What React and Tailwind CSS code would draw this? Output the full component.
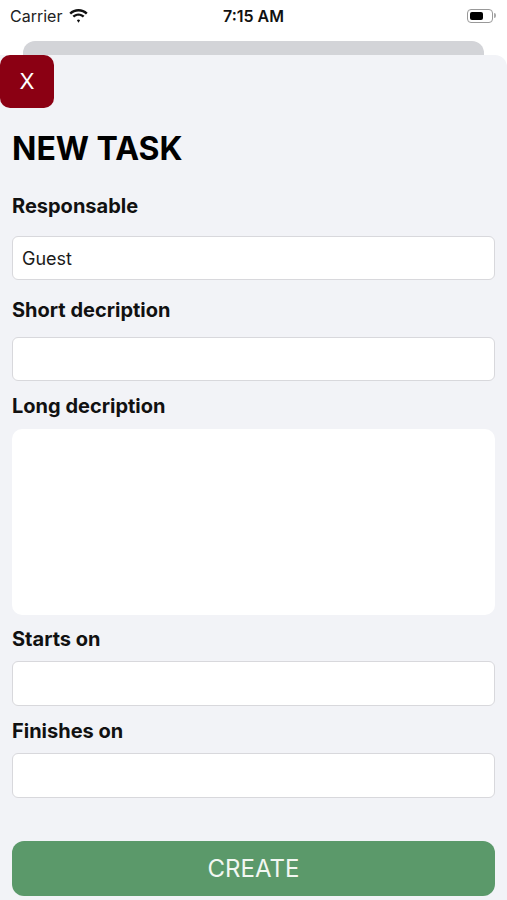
export default function App() {
  return (
    <div className="w-[507px] h-[900px] overflow-hidden bg-white relative" style={{ fontFamily: 'Inter, "Noto Sans", sans-serif' }}>
      {/* Status bar */}
      <div className="h-[31px] flex items-center justify-between px-[10px] text-[#111]">
        <div className="flex items-center gap-[6px] w-[120px]">
          <span className="text-[16px] leading-none text-[#222]">Carrier</span>
          <svg width="21" height="16" viewBox="0 0 20 15">
            <path d="M10 3.2c2.7 0 5.2 1 7.1 2.8l1.6-1.6C16.3 2.1 13.3.9 10 .9S3.7 2.1 1.3 4.4l1.6 1.6C4.8 4.2 7.3 3.2 10 3.2z" fill="#111" />
            <path d="M10 7.3c1.6 0 3 .6 4.1 1.6l1.6-1.6C14.2 5.9 12.2 5 10 5S5.8 5.9 4.3 7.3l1.6 1.6C7 7.9 8.4 7.3 10 7.3z" fill="#111" />
            <path d="M10 10.9c.6 0 1.1.2 1.5.6L10 13.9 8.5 11.5c.4-.4.9-.6 1.5-.6z" fill="#111" />
          </svg>
        </div>
        <span className="text-[16px] font-semibold leading-none">7:15 AM</span>
        <div className="w-[120px] flex justify-end pr-[1px]">
          <div className="flex items-center">
            <div className="w-[26px] h-[14px] rounded-[4px] border border-[#999] p-[2px] flex">
              <div className="w-[13px] h-full rounded-[2px] bg-black" />
            </div>
            <div className="w-[2px] h-[5px] rounded-r-sm bg-[#aaa] ml-[1px]" />
          </div>
        </div>
      </div>

      {/* Background card */}
      <div className="mt-[10px] mx-[23px] h-[20px] rounded-t-[12px] bg-[#d3d4d8]" />

      {/* Sheet */}
      <div className="absolute left-0 right-0 top-[55px] bottom-0 bg-[#f2f3f7] rounded-tr-[12px]">
        <button className="w-[54px] h-[53px] rounded-[10px] bg-[#8b0013] text-white text-[22px] flex items-center justify-center">
          X
        </button>

        <div className="px-[12px]">
          <h1 className="mt-[21px] text-[32px] leading-[40px] font-bold text-black">NEW TASK</h1>

          <label className="block mt-[25px] text-[20px] leading-[24px] font-bold text-[#111]">Responsable</label>
          <div className="mt-[18px] h-[44px] bg-white border border-[#d8d8dc] rounded-[6px] flex items-center px-[9px] text-[18px] text-[#1a1a1a]">
            Guest
          </div>

          <label className="block mt-[18px] text-[20px] leading-[24px] font-bold text-[#111]">Short decription</label>
          <div className="mt-[15px] h-[44px] bg-white border border-[#d8d8dc] rounded-[6px]" />

          <label className="block mt-[13px] text-[20px] leading-[24px] font-bold text-[#111]">Long decription</label>
          <div className="mt-[11px] h-[186px] bg-white rounded-[10px]" />

          <label className="block mt-[12px] text-[20px] leading-[24px] font-bold text-[#111]">Starts on</label>
          <div className="mt-[10px] h-[45px] bg-white border border-[#d8d8dc] rounded-[6px]" />

          <label className="block mt-[13px] text-[20px] leading-[24px] font-bold text-[#111]">Finishes on</label>
          <div className="mt-[10px] h-[45px] bg-white border border-[#d8d8dc] rounded-[6px]" />

          <button className="mt-[43px] w-full h-[55px] rounded-[12px] bg-[#5b996a] text-[#f2f7f2] text-[24px] flex items-center justify-center">
            CREATE
          </button>
        </div>
      </div>
    </div>
  )
}
